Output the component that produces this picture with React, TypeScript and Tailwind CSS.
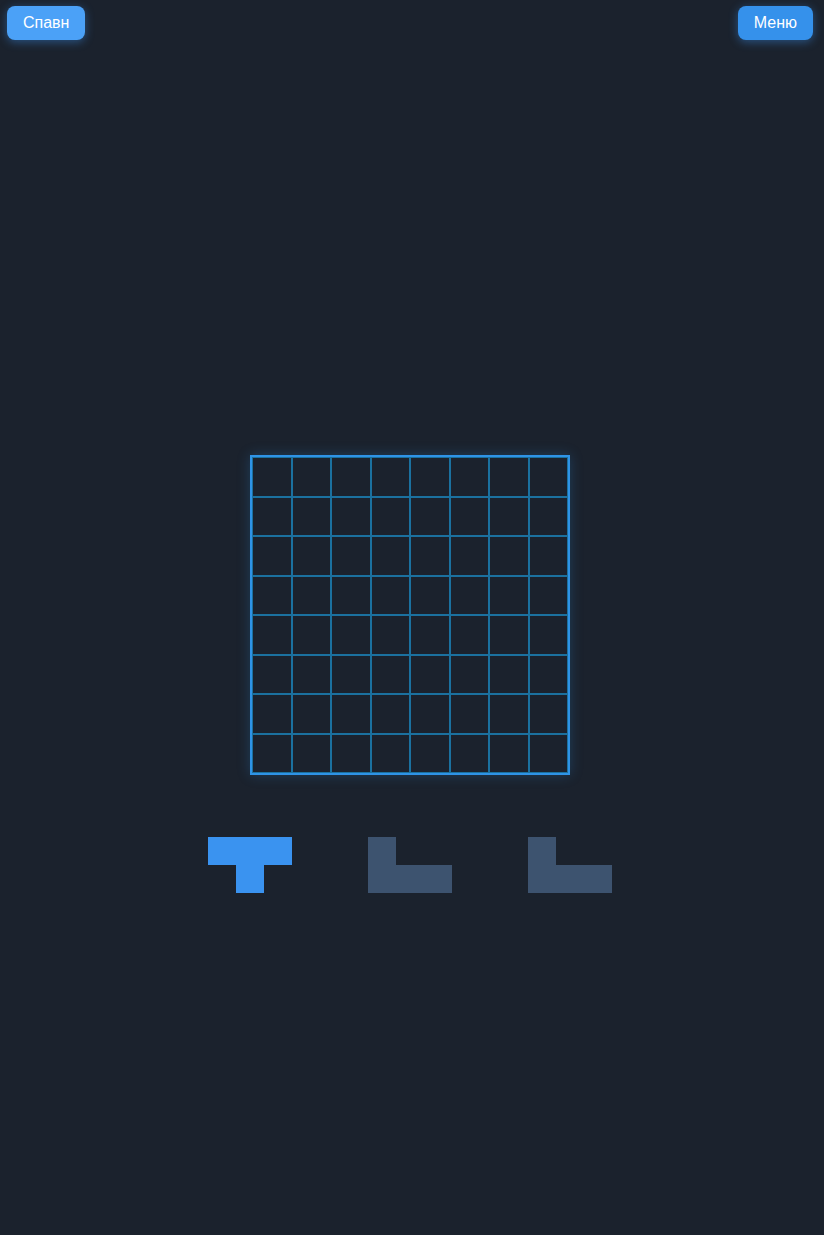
const cells = Array.from({ length: 64 }, (_, i) => i);

const T = [1, 1, 1, 0, 1, 0];
const L = [1, 0, 0, 1, 1, 1];

function Piece({ shape, color }: { shape: number[]; color: string }) {
  return (
    <div className="grid grid-cols-[28px_28px_28px] grid-rows-[28px_28px]">
      {shape.map((c, i) => (
        <div key={i} className={c ? color : ""} />
      ))}
    </div>
  );
}

export default function App() {
  return (
    <div className="w-full min-h-screen bg-[#1b222d] font-['Liberation_Sans',Arial,sans-serif]">
      <div className="flex items-start justify-between pl-[7px] pr-[11px] pt-[6px]">
        <button className="h-[34px] px-4 rounded-lg bg-[#4ba1f7] text-white text-base shadow-[0_2px_10px_rgba(59,147,240,0.45)]">
          Спавн
        </button>
        <button className="h-[34px] px-4 rounded-lg bg-[#3591eb] text-white text-base shadow-[0_2px_10px_rgba(59,147,240,0.45)]">
          Меню
        </button>
      </div>

      <div className="flex flex-col items-center w-[820px] mt-[415px]">
        <div className="w-[320px] h-[320px] border-2 border-[#2f93e6] shadow-[0_0_12px_rgba(47,147,230,0.25)] grid grid-cols-8 grid-rows-8">
          {cells.map((i) => (
            <div key={i} className="border border-[#1b86bb]/80" />
          ))}
        </div>

        <div className="flex mt-[62px]">
          <div className="w-[160px] flex justify-center">
            <Piece shape={T} color="bg-[#3a93f0]" />
          </div>
          <div className="w-[160px] flex justify-center">
            <Piece shape={L} color="bg-[#3d536f]" />
          </div>
          <div className="w-[160px] flex justify-center">
            <Piece shape={L} color="bg-[#3d536f]" />
          </div>
        </div>
      </div>
    </div>
  );
}
